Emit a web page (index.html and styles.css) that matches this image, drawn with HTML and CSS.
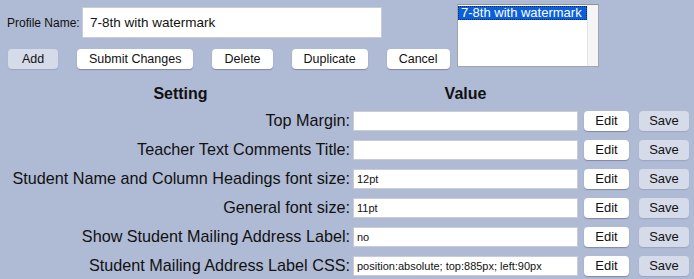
FILE: index.html
```html
<!DOCTYPE html>
<html lang="en">

<head>
    <meta charset="UTF-8">
    <meta name="viewport" content="width=device-width, initial-scale=1.0">
    <title>Report Card Profiles</title>
    <link rel="stylesheet" href="styles.css">
</head>

<body>
    <div class="top">
        <div class="profile-form">
            <div class="profile-row">
                <label for="profile_name">Profile Name:</label>
                <input type="text" id="profile_name" class="profile-input" value="7-8th with watermark">
            </div>
            <div class="button-row">
                <button class="btn disabled">Add</button>
                <button class="btn">Submit Changes</button>
                <button class="btn">Delete</button>
                <button class="btn">Duplicate</button>
                <button class="btn">Cancel</button>
            </div>
        </div>

        <div class="listbox">
            <div class="options">
                <div class="option selected">7-8th with watermark</div>
            </div>
            <div class="scroll-track"></div>
        </div>
    </div>

    <div class="settings">
        <div class="head-setting">Setting</div>
        <div class="head-value">Value</div>
        <div></div>
        <div></div>

        <div class="label">Top Margin:</div>
        <input type="text" class="value" value="">
        <button class="btn small">Edit</button>
        <button class="btn small disabled">Save</button>

        <div class="label">Teacher Text Comments Title:</div>
        <input type="text" class="value" value="">
        <button class="btn small">Edit</button>
        <button class="btn small disabled">Save</button>

        <div class="label">Student Name and Column Headings font size:</div>
        <input type="text" class="value" value="12pt">
        <button class="btn small">Edit</button>
        <button class="btn small disabled">Save</button>

        <div class="label">General font size:</div>
        <input type="text" class="value" value="11pt">
        <button class="btn small">Edit</button>
        <button class="btn small disabled">Save</button>

        <div class="label">Show Student Mailing Address Label:</div>
        <input type="text" class="value" value="no">
        <button class="btn small">Edit</button>
        <button class="btn small disabled">Save</button>

        <div class="label">Student Mailing Address Label CSS:</div>
        <input type="text" class="value" value="position:absolute; top:885px; left:90px">
        <button class="btn small">Edit</button>
        <button class="btn small disabled">Save</button>
    </div>
</body>

</html>
```

FILE: styles.css
```css
/* General */
body {
    margin: 0;
    padding: 0;
    background-color: #afbad5;
    font-family: 'Liberation Sans', Arial, sans-serif;
    color: #111;
}

/* Top area: profile form + list */
.top {
    display: flex;
    align-items: flex-start;
    padding: 4px 0 0 7px;
}

.profile-form {
    margin-top: 3px;
    width: 450px;
}

.profile-row {
    display: flex;
    align-items: center;
    height: 31px;
}

.profile-row label {
    font-size: 12px;
    width: 75px;
}

.profile-input {
    box-sizing: border-box;
    width: 300px;
    height: 31px;
    border: 1px solid #c9ccd3;
    background: #fff;
    padding: 0 7px;
    font-family: inherit;
    font-size: 13.5px;
    color: #111;
    outline: none;
}

.button-row {
    display: flex;
    gap: 19px;
    margin-top: 11px;
    padding-left: 1px;
}

.btn {
    box-sizing: border-box;
    height: 20px;
    padding: 0 12px;
    border: none;
    border-radius: 4px;
    background: #fff;
    box-shadow: 0 1px 1px rgba(40, 50, 80, 0.35);
    font-family: inherit;
    font-size: 12.5px;
    color: #111;
    cursor: pointer;
    white-space: nowrap;
}

.btn.disabled {
    background: #d6dbe9;
    box-shadow: 0 1px 1px rgba(40, 50, 80, 0.15);
}

.button-row .btn:first-child {
    width: 50px;
}

/* Listbox */
.listbox {
    display: flex;
    width: 142px;
    height: 63px;
    box-sizing: border-box;
    border: 1px solid #a0a4ab;
    border-top-color: #8e9299;
    background: #fff;
}

.options {
    flex: 1;
    min-width: 0;
    padding-top: 1px;
}

.option {
    font-size: 13px;
    line-height: 14px;
    height: 14px;
    padding: 0 3px;
    white-space: nowrap;
    overflow: hidden;
}

.option.selected {
    background: #0b5fd9;
    color: #fff;
    outline: 1px dotted #0a2a6a;
    outline-offset: -1px;
}

.scroll-track {
    width: 10px;
    background: #f5f5f5;
    border-left: 1px solid #e6e6e6;
}

/* Settings table */
.settings {
    display: grid;
    grid-template-columns: 345px 231px 55px 50px;
    grid-template-rows: 24px;
    grid-auto-rows: 29px;
    align-items: center;
    margin: 13px 0 0 8px;
}

.head-setting,
.head-value {
    font-weight: bold;
    font-size: 16px;
    text-align: center;
}

.head-value {
    width: 225px;
}

.label {
    font-size: 16.2px;
    text-align: right;
    padding-right: 3px;
    white-space: nowrap;
}

.value {
    box-sizing: border-box;
    width: 225px;
    height: 20px;
    border: 1px solid #c9ccd3;
    background: #fff;
    padding: 0 3px;
    font-family: inherit;
    font-size: 11px;
    color: #111;
    outline: none;
}

.btn.small {
    width: 45px;
    padding: 0;
    font-size: 13px;
}

.btn.small.disabled {
    width: 50px;
}
```
